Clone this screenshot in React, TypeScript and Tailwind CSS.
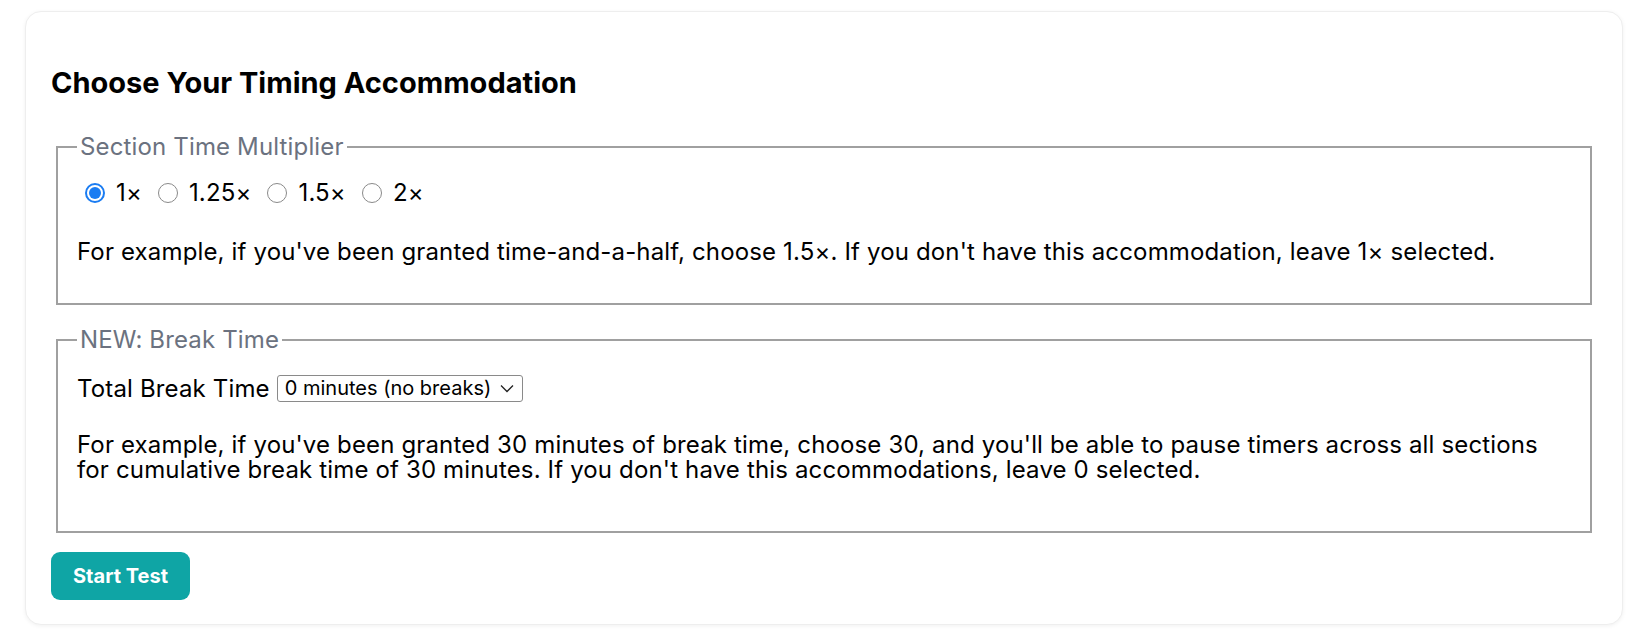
import React, { useState } from "react";

function Radio({ checked, label, onClick }: { checked: boolean; label: string; onClick: () => void }) {
  return (
    <label className="flex items-center cursor-pointer" onClick={onClick}>
      {checked ? (
        <span className="w-[20px] h-[20px] rounded-full border-[2px] border-[#1a7cf2] flex items-center justify-center">
          <span className="w-[12px] h-[12px] rounded-full bg-[#1a7cf2]" />
        </span>
      ) : (
        <span className="w-[20px] h-[20px] rounded-full border border-[#8a8a8a] bg-white" />
      )}
      <span className="ml-[11px]">{label}</span>
    </label>
  );
}

export default function App() {
  const [mult, setMult] = useState("1×");
  return (
    <div
      className="min-h-screen bg-white pt-[11px] pl-[25px] text-black"
      style={{ fontFamily: "Inter, 'Noto Sans', sans-serif" }}
    >
      <div className="w-[1598px] h-[614px] rounded-[16px] border border-[#eeeeee] shadow-[0_1px_4px_rgba(0,0,0,0.06)] bg-white px-[25px] pt-[53px]">
        <h2 className="text-[29px] leading-[36px] font-bold">Choose Your Timing Accommodation</h2>

        <fieldset className="mx-[5px] mt-[33px] border-2 border-[#a0a0a0] px-[19px] pb-[39px] pt-[21px] tracking-[0.15px]">
          <legend className="px-[3px] text-[24px] leading-[25px] text-[#6b7280]">Section Time Multiplier</legend>
          <div className="flex items-center gap-[16px] text-[24px] leading-[25px] pl-[8px]">
            {["1×", "1.25×", "1.5×", "2×"].map((m) => (
              <Radio key={m} checked={mult === m} label={m} onClick={() => setMult(m)} />
            ))}
          </div>
          <p className="mt-[34px] text-[24px] leading-[25px]">
            For example, if you've been granted time-and-a-half, choose 1.5×. If you don't have this accommodation, leave 1× selected.
          </p>
        </fieldset>

        <fieldset className="mx-[5px] mt-[22px] border-2 border-[#a0a0a0] px-[19px] pb-[49px] pt-[21px] tracking-[0.15px]">
          <legend className="px-[3px] text-[24px] leading-[25px] text-[#6b7280]">NEW: Break Time</legend>
          <div className="flex items-center text-[24px] leading-[31px]">
            <span>Total Break Time</span>
            <div className="ml-[7px] h-[27px] w-[246px] rounded-[3px] border border-[#8a8a8a] bg-white flex items-center justify-between pl-[7px] pr-[8px] text-[20px] tracking-normal">
              <span>0 minutes (no breaks)</span>
              <svg width="14" height="9" viewBox="0 0 14 9" fill="none">
                <path d="M1 1.5L7 7.5L13 1.5" stroke="#222" strokeWidth="1.3" />
              </svg>
            </div>
          </div>
          <p className="mt-[28px] text-[24px] leading-[25px]">
            For example, if you've been granted 30 minutes of break time, choose 30, and you'll be able to pause timers across all sections for cumulative break time of 30 minutes. If you don't have this accommodations, leave 0 selected.
          </p>
        </fieldset>

        <button className="mt-[19px] h-[48px] w-[139px] rounded-[9px] bg-[#0fa5a5] text-white text-[20px] font-bold">
          Start Test
        </button>
      </div>
    </div>
  );
}
